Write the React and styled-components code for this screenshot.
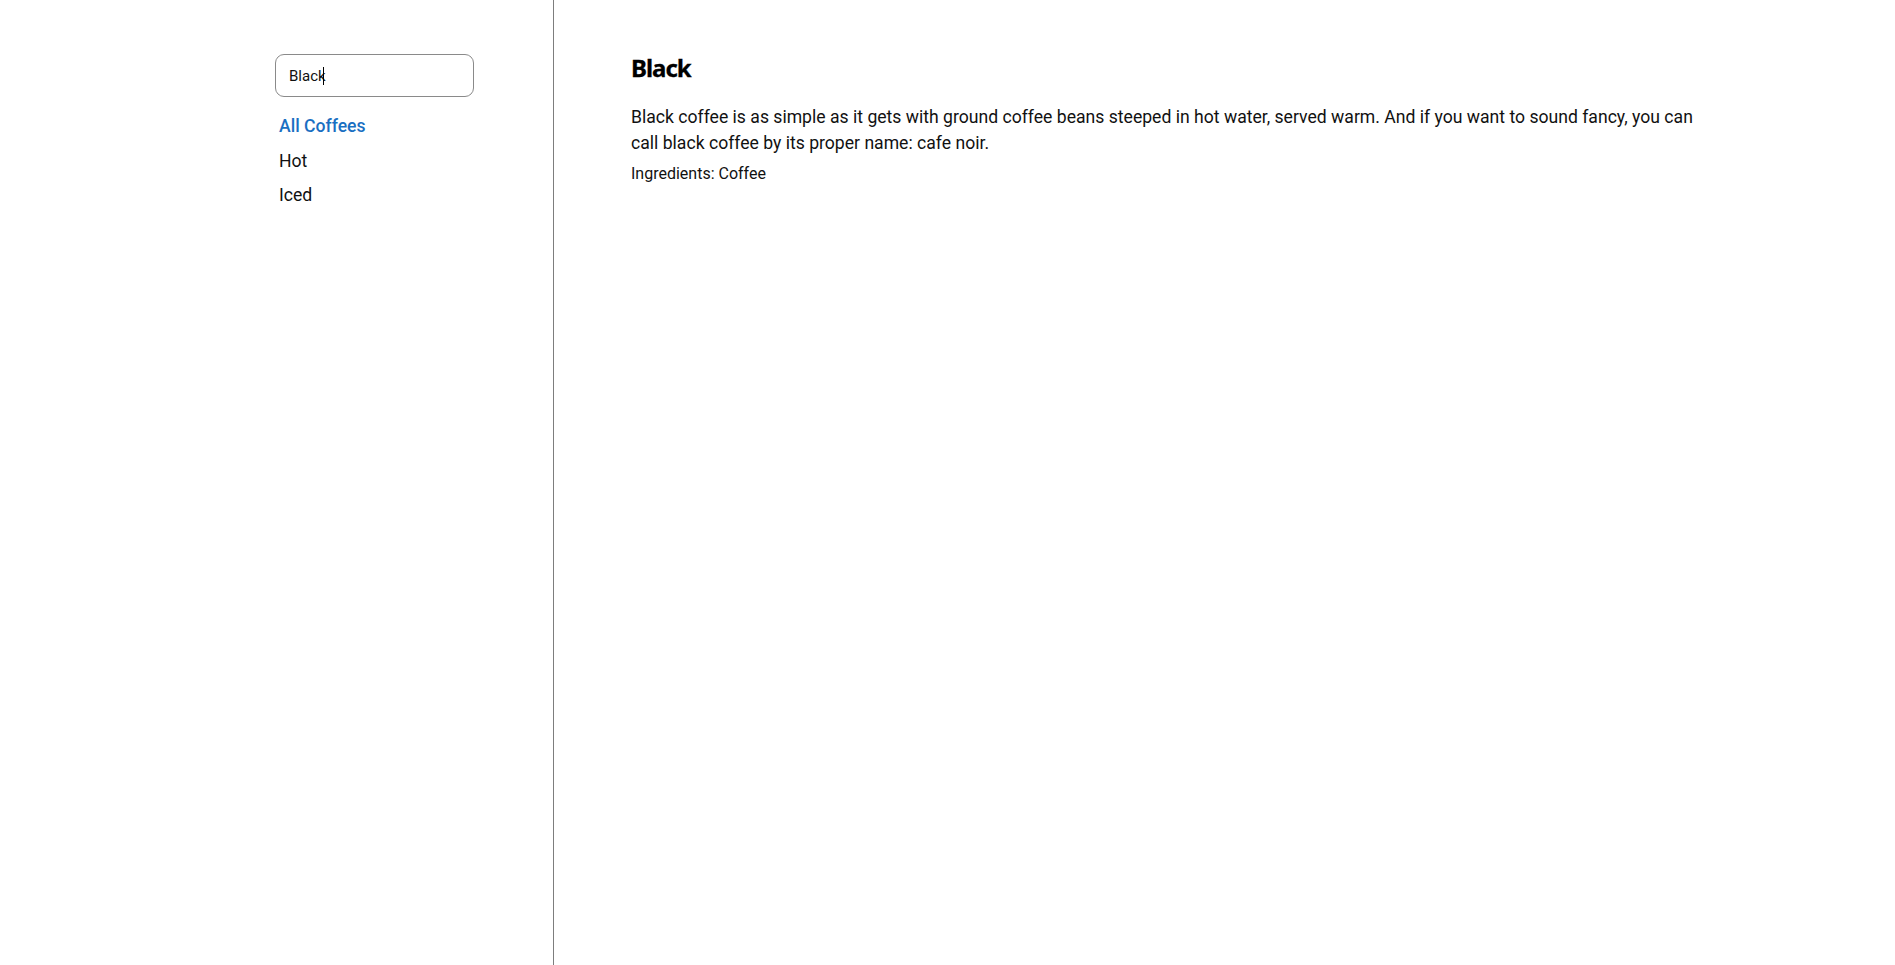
import React, { useState } from "react";
import styled, { createGlobalStyle } from "styled-components";

const GlobalStyle = createGlobalStyle`
  html, body {
    margin: 0;
    padding: 0;
    background: #fff;
    font-family: Roboto, "Liberation Sans", sans-serif;
    color: #111;
  }
`;

const Layout = styled.div`
  display: flex;
  min-height: 965px;
`;

const Sidebar = styled.aside`
  width: 554px;
  flex-shrink: 0;
  box-sizing: border-box;
  padding: 54px 0 0 275px;
  border-right: 1px solid #7d7d7d;
  display: flex;
  flex-direction: column;
`;

const SearchWrap = styled.div`
  position: relative;
  width: 199px;
`;

const SearchBox = styled.input`
  width: 199px;
  height: 43px;
  box-sizing: border-box;
  border: 1px solid #8a8a8a;
  border-radius: 9px;
  padding: 0 13px;
  font-family: Roboto, "Liberation Sans", sans-serif;
  font-size: 15px;
  color: #111;
  outline: none;
  caret-color: transparent;
`;

const Caret = styled.span`
  position: absolute;
  top: 13px;
  left: ${p => p.$left}px;
  width: 1px;
  height: 18px;
  background: #000;
  pointer-events: none;
`;

const Menu = styled.nav`
  display: flex;
  flex-direction: column;
  margin-top: 12px;
  padding-left: 4px;
`;

const MenuItem = styled.a`
  font-size: 17.6px;
  line-height: 34.5px;
  font-weight: ${p => (p.$active ? 500 : 400)};
  color: ${p => (p.$active ? "#1a6fc2" : "#111")};
  text-decoration: none;
  cursor: pointer;
`;

const Main = styled.main`
  flex: 1;
  padding: 52px 181px 0 77px;
`;

const Title = styled.h1`
  margin: 0 0 20px;
  font-family: "Noto Sans", "Open Sans", sans-serif;
  font-size: 24px;
  line-height: 32px;
  font-weight: 700;
  letter-spacing: -1px;
  color: #000;
  -webkit-text-stroke: 0.3px #000;
`;

const Description = styled.p`
  margin: 0;
  font-size: 17.6px;
  line-height: 26.4px;
  color: #111;
`;

const Ingredients = styled.p`
  margin: 5px 0 0;
  font-size: 16px;
  line-height: 24px;
  color: #111;
`;

const categories = ["All Coffees", "Hot", "Iced"];

const App = () => {
  const [query, setQuery] = useState("Black");
  const [active, setActive] = useState("All Coffees");
  return (
    <>
      <GlobalStyle />
      <Layout>
        <Sidebar>
          <SearchWrap>
            <SearchBox value={query} onChange={e => setQuery(e.target.value)} />
            <Caret $left={48} />
          </SearchWrap>
          <Menu>
            {categories.map(c => (
              <MenuItem key={c} $active={c === active} onClick={() => setActive(c)}>
                {c}
              </MenuItem>
            ))}
          </Menu>
        </Sidebar>
        <Main>
          <Title>Black</Title>
          <Description>
            Black coffee is as simple as it gets with ground coffee beans steeped in hot
            water, served warm. And if you want to sound fancy, you can call black coffee
            by its proper name: cafe noir.
          </Description>
          <Ingredients>Ingredients: Coffee</Ingredients>
        </Main>
      </Layout>
    </>
  );
};

export default App;
